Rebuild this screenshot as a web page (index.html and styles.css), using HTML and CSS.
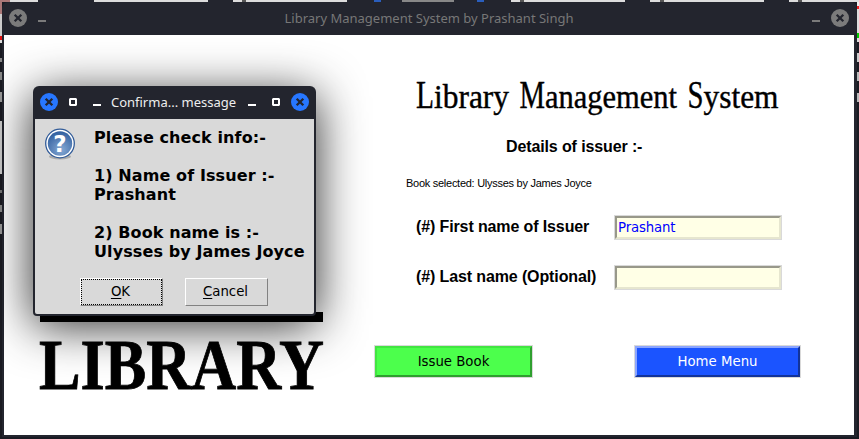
FILE: index.html
```html
<!DOCTYPE html>
<html lang="en">
<head>
<meta charset="utf-8">
<title>Library Management System by Prashant Singh</title>
<link rel="stylesheet" href="styles.css">
</head>
<body>
<svg class="defs" width="0" height="0" aria-hidden="true">
  <symbol id="close" viewBox="0 0 18 18"><circle cx="9" cy="9" r="9"/><path d="M5.7 5.7l6.6 6.6M12.3 5.7l-6.6 6.6" stroke="#23252e" stroke-width="2.3"/></symbol>
  <symbol id="min" viewBox="0 0 8 8"><path d="M0 6h8v2H0z"/></symbol>
  <symbol id="max" viewBox="0 0 8 8"><path fill-rule="evenodd" d="M1 0h6l1 1v6l-1 1H1L0 7V1zM2 2v4h4V2z"/></symbol>
</svg>
<div class="window">
  <header class="titlebar">
    <svg class="i18"><use href="#close"/></svg>
    <svg class="i8"><use href="#min"/></svg>
    <span class="caption">Library Management System by Prashant Singh</span>
    <svg class="i8"><use href="#min"/></svg>
    <svg class="i18"><use href="#close"/></svg>
  </header>
  <main class="content">
    <section class="brand">
      <svg width="310" height="110" viewBox="0 0 310 110">
        <path d="M6 0h283v10H6z"/>
        <text class="wordmark" x="5" y="76.5" textLength="285" lengthAdjust="spacingAndGlyphs">LIBRARY</text>
      </svg>
    </section>
    <section class="form">
      <svg class="heading" width="370" height="44" viewBox="0 0 370 44">
        <text y="35"><tspan class="cap" x="4" textLength="18" lengthAdjust="spacingAndGlyphs">L</tspan><tspan x="22" textLength="75" lengthAdjust="spacingAndGlyphs">ibrary</tspan> <tspan class="cap" x="107.5" textLength="25.5" lengthAdjust="spacingAndGlyphs">M</tspan><tspan x="133" textLength="132" lengthAdjust="spacingAndGlyphs">anagement</tspan> <tspan class="cap" x="275.5" textLength="16" lengthAdjust="spacingAndGlyphs">S</tspan><tspan x="291.5" textLength="75" lengthAdjust="spacingAndGlyphs">ystem</tspan></text>
      </svg>
      <h2>Details of issuer :-</h2>
      <p class="selected">Book selected: Ulysses by James Joyce</p>
      <label class="row"><span>(#) First name of Issuer</span><input type="text" value="Prashant"></label>
      <label class="row"><span>(#) Last name (Optional)</span><input type="text"></label>
      <div class="actions">
        <button class="issue">Issue Book</button>
        <button class="home">Home Menu</button>
      </div>
    </section>
  </main>
</div>
<div class="dialog">
  <header class="dialog-bar">
    <svg class="i18 blue"><use href="#close"/></svg>
    <svg class="i8"><use href="#max"/></svg>
    <svg class="i8"><use href="#min"/></svg>
    <span class="caption">Confirma... message</span>
    <svg class="i8"><use href="#min"/></svg>
    <svg class="i8"><use href="#max"/></svg>
    <svg class="i18 blue"><use href="#close"/></svg>
  </header>
  <div class="dialog-body">
    <div class="message">
      <svg class="question" width="32" height="32" viewBox="0 0 32 32">
        <defs><radialGradient id="orb" cx=".55" cy=".75" r=".75"><stop offset="0" stop-color="#86a9d4"/><stop offset="1" stop-color="#315f9f"/></radialGradient></defs>
        <ellipse cx="16" cy="28.5" rx="11" ry="3" fill="#aaa"/>
        <circle cx="16" cy="15.5" r="14.3" fill="#fff" stroke="#315b98" stroke-width="1.3"/>
        <circle cx="16" cy="15.5" r="12.2" fill="url(#orb)"/>
        <text x="16" y="24" text-anchor="middle">?</text>
      </svg>
      <p>Please check info:-

1) Name of Issuer :-
Prashant

2) Book name is :-
Ulysses by James Joyce</p>
    </div>
    <div class="dialog-actions">
      <button class="focused"><span><u>O</u>K</span></button>
      <button><span><u>C</u>ancel</span></button>
    </div>
  </div>
</div>
</body>
</html>
```
FILE: styles.css
```css
* { box-sizing: border-box; }
html { height: 100%; overflow: hidden; }
body {
  margin: 0; padding: 2px 2px 0; height: 439px; overflow: hidden; position: relative;
  font-family: "DejaVu Sans", sans-serif; font-size: 14px;
  background:
    linear-gradient(90deg, #a77 0 10px, #ddd 10px 38px, #23252e 38px 94px, #ddd 94px 208px, #23252e 208px 233px, #ddd 233px 242px, #555 242px 246px, #ddd 246px 347px, #23252e 347px 374px, #2a5ebd 374px 381px, #23252e 381px 402px, #888 402px 454px, #23252e 454px 477px, #2a5ebd 477px 484px, #23252e 484px 511px, #ddd 511px 520px, #555 520px 524px, #ddd 524px 625px, #23252e 625px 650px, #ddd 650px 660px, #555 660px 664px, #ddd 664px 764px, #23252e 764px 789px, #ddd 789px 798px, #555 798px 802px, #ddd 802px) 0 0 / 100% 2px no-repeat,
    linear-gradient(#a77 0 14px, #ccc 14px 36px, #d11 36px 40px, #ddd 40px 43px, #1a1b22 43px 58px, #888 58px 62px, #1a1b22 62px 72px, #888 72px 80px, #1a1b22 80px 92px, #999 92px 102px, #1a1b22 102px 121px, #ccc 121px 174px, #1a1b22 174px 190px, #777 190px 193px, #1a1b22 193px 205px, #888 205px 212px, #1a1b22 212px 224px, #999 224px 234px, #1a1b22 234px) 0 0 / 2px 100% no-repeat,
    linear-gradient(#eee 0 6px, #e22 6px 9px, #ddd 9px 33px, #0c0 33px 38px, #ddd 38px 42px, #1a1b22 42px 53px, #ccc 53px 62px, #1a1b22 62px 72px, #bbb 72px 81px, #1a1b22 81px 93px, #bbb 93px 102px, #1a1b22 102px) 857px 0 / 2px 100% no-repeat,
    #191a22;
}
.defs { display: block; position: absolute; }
svg { flex: none; display: block; }
.i18 { width: 18px; height: 18px; }
.i8 { width: 8px; height: 8px; }
.window {
  width: 855px; height: 435px; padding: 0 3px 2px 2px;
  background: #23252e; border-radius: 6px 6px 0 0;
}
.titlebar { height: 33px; display: flex; align-items: center; padding: 0 5px 1px 5px; fill: #7b7b7b; }
.titlebar .i8:nth-child(2) { margin-left: 11px; }
.titlebar .i8:nth-child(4) { margin-right: 11px; }
.titlebar .caption { flex: 1; text-align: center; font: 13px "Noto Sans", sans-serif; color: #777; }
.content { height: 400px; background: #fff; display: flex; }
.brand { width: 360px; padding: 277px 0 0 30px; }
.wordmark { font: bold 71px "Liberation Serif", serif; stroke: #000; stroke-width: .8px; }
.form { width: 490px; padding: 38px 0 0 10px; }
.heading { margin-left: 38px; overflow: visible; font-family: "Liberation Serif", serif; font-size: 33px; stroke: #000; stroke-width: .4px; }
.heading .cap { font-size: 41px; }
.form h2 { margin: 20px 0 0 132px; font: bold 16px/20px "Liberation Sans", sans-serif; letter-spacing: -.12px; }
.selected { margin: 18px 0 0 32px; font: 11px/16px "Liberation Sans", sans-serif; letter-spacing: -.27px; }
.row { display: flex; align-items: center; height: 24px; margin: 24px 0 0 42px; font: bold 16px "Liberation Sans", sans-serif; letter-spacing: -.12px; }
.row span { width: 198px; white-space: nowrap; }
.row + .row { margin-top: 26px; }
.row input {
  width: 166px; height: 23px; margin: 1px; padding: 1px 1px 0; outline: 0; border-radius: 0;
  border: 2px solid; border-color: #98988a #e6e6cf #e6e6cf #98988a;
  box-shadow: 0 0 0 1px #d9d9d9; background: #ffffe6; color: #00f;
  font: 13.3px "DejaVu Sans", sans-serif; letter-spacing: -.15px;
}
.actions { display: flex; gap: 101px; margin-top: 56px; }
.actions button {
  height: 31px; margin: 1px; padding: 0 0 1px; border: 2px solid; box-shadow: 0 0 0 1px #d9d9d9;
  font: 13.3px "DejaVu Sans", sans-serif;
}
.issue { width: 157px; background: #4cff4c; border-color: #42e542 #2f9f2f #2f9f2f #42e542 !important; }
.home { width: 165px; background: #1b54ff; color: #fff; border-color: #8ba5ff #123399 #123399 #8ba5ff !important; }
.dialog {
  position: absolute; left: 33px; top: 86px; width: 283px; height: 230px;
  padding: 0 2px 2px; background: #23252e; border-radius: 6px 6px 4px 4px;
  box-shadow: 0 9px 48px rgba(0, 0, 0, .85);
}
.dialog-bar { height: 33px; display: flex; align-items: center; padding: 0 5px 1px; fill: #fff; }
.dialog-bar .blue { fill: #2777ff; }
.dialog-bar .blue + .i8 { margin-left: 11px; }
.dialog-bar .i8 + .i8 { margin-left: 16px; }
.dialog-bar .i8:nth-child(6) { margin-right: 11px; }
.dialog-bar .caption { flex: 1; padding-right: 2px; text-align: center; font: 13px "Noto Sans", sans-serif; color: #eee; white-space: nowrap; }
.dialog-body { height: 195px; background: #d9d9d9; border-radius: 0 0 2px 2px; }
.message { display: flex; padding: 9px 0 0 9px; }
.question text { font: bold 23px "DejaVu Sans", sans-serif; fill: #fff; }
.message p { margin: 0 0 0 18px; white-space: pre; font-weight: bold; font-size: 16px; line-height: 19px; letter-spacing: .1px; }
.dialog-actions { display: flex; gap: 22px; padding: 17px 0 0 45px; }
.dialog-actions button {
  width: 83px; height: 28px; padding: 0 2px 2px 0; border: 1px solid; border-color: #fff #828282 #828282 #fff;
  background: #d9d9d9; font: 13.3px "DejaVu Sans", sans-serif; color: #000;
}
.dialog-actions .focused { outline: 1px dotted #000; outline-offset: -2px; }
.dialog-actions u { text-underline-offset: 2px; }
```
